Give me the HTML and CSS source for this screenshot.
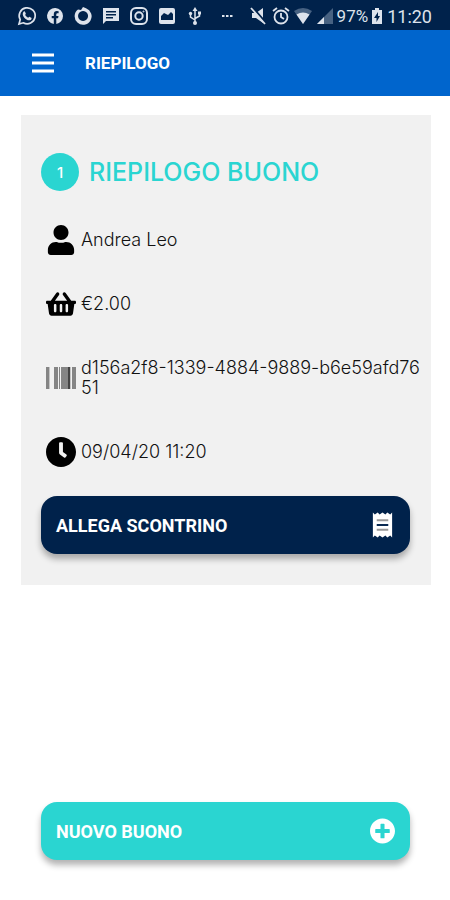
FILE: index.html
```html
<!DOCTYPE html>
<html lang="it">
<head>
<meta charset="utf-8">
<meta name="viewport" content="width=device-width, initial-scale=1">
<title>Riepilogo</title>
<link rel="stylesheet" href="styles.css">
</head>
<body>
<div class="status">
  <div class="status-group notifications">
    <svg class="status-icon" viewBox="0 0 20 20"><path d="M2 18l1.200-4.300A8 8 0 1 1 6.300 16.800z" fill="none" stroke="currentColor" stroke-width="1.700"/><path d="M6.800 5.600c.5-.4 1-.3 1.300.3l.7 1.500c.1.400-.1.700-.7 1.400.7 1.400 1.800 2.400 3.200 3 .6-.7.900-1.100 1.400-.9l1.600.8c.5.300.3 1.400-.3 2-2 1.500-5 0-6.700-2C5.400 9.500 5.200 7.200 6.800 5.600z" fill="currentColor"/></svg>
    <svg class="status-icon" viewBox="0 0 20 20"><path d="M18 10a8 8 0 1 0-9.200 7.900v-5.600H6.700V10h2.100V8.200c0-2 1.200-3.100 3-3.100l1.800.2v2h-1c-1 0-1.300.6-1.300 1.200V10h2.200l-.4 2.300h-1.800v5.600A8 8 0 0 0 18 10z" fill="currentColor"/></svg>
    <svg class="status-icon" viewBox="0 0 20 20"><path fill-rule="evenodd" d="M10 1l3 1.300A8.500 8.500 0 1 1 5 3.500L8 4zM10 5a5 5 0 1 0 .1 0z" fill="currentColor"/></svg>
    <svg class="status-icon" viewBox="0 0 20 20"><path fill-rule="evenodd" d="M2 2h16v13H5l-3 3zM5 5v1.500h10V5zm0 3v1.500h10V8zm0 3v1.500h7V11z" fill="currentColor"/></svg>
    <svg class="status-icon" viewBox="0 0 20 20" fill="none" stroke="currentColor" stroke-width="2"><rect x="2" y="2" width="16" height="16" rx="5"/><circle cx="10" cy="10" r="3.700"/><circle cx="14.500" cy="5.500" r=".5" stroke-width="1"/></svg>
    <svg class="status-icon" viewBox="0 0 20 20"><path fill-rule="evenodd" d="M4 2h12q2 0 2 2v12q0 2-2 2H4q-2 0-2-2V4q0-2 2-2zm0 12h12V8l-2-2-3 3-4-2-3 3z" fill="currentColor"/></svg>
    <svg class="status-icon" viewBox="0 0 20 20"><path d="M10 4v12M5.500 8v3l4.500 3M14.500 7v3L10 12.500" fill="none" stroke="currentColor" stroke-width="1.500"/><path d="M10 1l2.500 4h-5zM13 5.500h3v3h-3z" fill="currentColor"/><circle cx="5.500" cy="7.500" r="1.700" fill="currentColor"/><circle cx="10" cy="17" r="2" fill="currentColor"/></svg>
  </div>
  <svg class="status-icon" viewBox="0 0 20 20" fill="currentColor"><path d="M5 9h2.500v2H5zM9 9h2.500v2H9zM13 9h2.500v2H13z"/></svg>
  <div class="status-group system">
    <svg class="status-icon" viewBox="0 0 20 20"><path d="M3 7h4l7-5v15l-7-5H3z" fill="currentColor"/><path d="M4 2l14 16" stroke="#00224b" stroke-width="2"/><path d="M2 2l14 16" stroke="currentColor" stroke-width="1.800"/></svg>
    <svg class="status-icon" viewBox="0 0 20 20" fill="none" stroke="currentColor" stroke-width="1.800"><circle cx="10" cy="11" r="6.500"/><path d="M10 7v4l3 2M2 5l4-3M18 5l-4-3"/></svg>
    <svg class="status-icon" viewBox="0 0 20 20"><path d="M1 5q9-6 18 0l-9 13z" fill="#476282"/><path d="M3.500 8.500q6.500-4 13 0L10 18z" fill="currentColor"/></svg>
    <svg class="status-icon" viewBox="0 0 20 20"><path d="M18 2v16H2z" fill="#476282"/><path d="M9 11v7H2z" fill="currentColor"/></svg>
    <span class="percent">97%</span>
    <svg class="battery" viewBox="0 0 12 18"><path fill-rule="evenodd" d="M4 1h4v2h3v14H1V3h3zm3 4l-4 6h2.500v4L9 9H7z" fill="currentColor"/></svg>
    <time>11:20</time>
  </div>
</div>
<header class="app-bar">
  <button class="menu" type="button" aria-label="Menu"><svg viewBox="0 0 24 20"><path d="M1 2h22M1 10h22M1 18h22" stroke="currentColor" stroke-width="3"/></svg></button>
  <h1>RIEPILOGO</h1>
</header>
<main>
  <section class="card">
    <h2><span class="step">1</span>RIEPILOGO BUONO</h2>
    <ul>
      <li><svg class="icon" viewBox="0 0 448 512"><path d="M224 256c70.700 0 128-57.300 128-128S294.700 0 224 0 96 57.300 96 128s57.300 128 128 128zm89.600 32h-16.700c-22.200 10.200-46.900 16-72.900 16s-50.600-5.800-72.900-16h-16.700C60.200 288 0 348.200 0 422.400V464c0 26.500 21.500 48 48 48h352c26.500 0 48-21.500 48-48v-41.600c0-74.200-60.200-134.400-134.400-134.400z"/></svg><span>Andrea Leo</span></li>
      <li><svg class="icon" viewBox="0 0 576 512"><path d="M576 216v16c0 13.255-10.745 24-24 24h-8l-26.113 182.788C514.509 462.435 494.257 480 470.370 480H105.630c-23.887 0-44.139-17.565-47.518-41.212L32 256h-8c-13.255 0-24-10.745-24-24v-16c0-13.255 10.745-24 24-24h67.341l106.780-146.821c10.395-14.292 30.407-17.453 44.701-7.058 14.293 10.395 17.453 30.408 7.058 44.701L170.477 192h235.046L326.120 82.821c-10.395-14.292-7.234-34.306 7.059-44.701 14.291-10.395 34.306-7.235 44.701 7.058L484.659 192H552c13.255 0 24 10.745 24 24zM312 392V280c0-13.255-10.745-24-24-24s-24 10.745-24 24v112c0 13.255 10.745 24 24 24s24-10.745 24-24zm112 0V280c0-13.255-10.745-24-24-24s-24 10.745-24 24v112c0 13.255 10.745 24 24 24s24-10.745 24-24zm-224 0V280c0-13.255-10.745-24-24-24s-24 10.745-24 24v112c0 13.255 10.745 24 24 24s24-10.745 24-24z"/></svg><span>€2.00</span></li>
      <li><svg class="icon" viewBox="0 0 30 30"><path d="M0 4h3v22H0zM8 4h4v22H8zM13 4h1v22h-1zM15 4h7v22h-7zM26 4h4v22h-4z" fill="#858585"/><path d="M3 4h1v22H3zM24 4h1v22h-1z" fill="#c4c4c4"/><path d="M22 4h2v22h-2z" fill="#444"/></svg><span>d156a2f8-1339-4884-9889-b6e59afd7651</span></li>
      <li><svg class="icon" viewBox="8 8 496 496"><path d="M256,8C119,8,8,119,8,256S119,504,256,504,504,393,504,256,393,8,256,8Zm92.490,313h0l-20,25a16,16,0,0,1-22.490,2.500h0l-67-49.720a40,40,0,0,1-15-31.230V112a16,16,0,0,1,16-16h32a16,16,0,0,1,16,16V256l58,42.500A16,16,0,0,1,348.490,321Z"/></svg><span>09/04/20 11:20</span></li>
    </ul>
    <button class="action attach" type="button">ALLEGA SCONTRINO
      <svg viewBox="0 0 26 26"><path d="M3 0l2 2 3-2 2 2 3-2 3 2 2-2 3 2 2-2v26l-2-2-3 2-2-2-3 2-3-2-2 2-3-2-2 2z" fill="#fff"/><path d="M7 8h12M7 18h12" stroke="#999" stroke-width="2"/><path d="M7 13h12" stroke="#00224b" stroke-width="2"/></svg>
    </button>
  </section>
  <button class="action create" type="button">NUOVO BUONO
    <svg viewBox="8 8 496 496"><path fill="#fff" d="M256 8C119 8 8 119 8 256s111 248 248 248 248-111 248-248S393 8 256 8zm144 276c0 6.600-5.400 12-12 12h-92v92c0 6.600-5.400 12-12 12h-56c-6.600 0-12-5.400-12-12v-92h-92c-6.600 0-12-5.400-12-12v-56c0-6.600 5.400-12 12-12h92v-92c0-6.600 5.400-12 12-12h56c6.600 0 12 5.400 12 12v92h92c6.600 0 12 5.400 12 12v56z"/></svg>
  </button>
</main>
</body>
</html>
```

FILE: styles.css
```css
* { box-sizing: border-box; }
body {
  margin: 0;
  min-height: 100vh;
  display: flex;
  flex-direction: column;
  background: #fff;
  font-family: Roboto, sans-serif;
}
button { border: 0; font: inherit; cursor: pointer; }
.status {
  display: flex;
  align-items: center;
  justify-content: space-between;
  height: 30px;
  padding: 2px 18px 0 17px;
  background: #00224b;
  color: #dde3ec;
  font-size: 18px;
}
.status-group { display: flex; align-items: center; }
.notifications { gap: 8px; }
.system { gap: 2px; }
.status-icon { width: 20px; height: 20px; }
.percent { font-size: 17px; }
.battery { width: 12px; height: 18px; margin: 0 2px 0 1px; }
.app-bar {
  display: flex;
  align-items: center;
  gap: 30px;
  height: 66px;
  padding: 0 31px;
  background: #0065cd;
  color: #fff;
}
.app-bar h1 { margin: 0; font-size: 17px; font-weight: 700; }
.menu { display: flex; padding: 0; background: none; color: inherit; }
.menu svg { width: 24px; height: 20px; }
main {
  flex: 1;
  display: flex;
  flex-direction: column;
  padding: 19px 19px 40px 21px;
}
.card { padding: 38px 0 31px 20px; background: #f1f1f1; font-family: Inter, sans-serif; }
.card h2 {
  display: flex;
  align-items: center;
  gap: 10px;
  margin: 0 0 17px;
  color: #2ad5d1;
  font-size: 25px;
  font-weight: 500;
}
.step {
  display: flex;
  align-items: center;
  justify-content: center;
  width: 38px;
  height: 38px;
  border-radius: 50%;
  background: #2ad5d1;
  color: #fff;
  font-size: 15px;
}
.card ul { margin: 0 0 12px; padding: 0; list-style: none; }
.card li {
  display: flex;
  align-items: center;
  gap: 5px;
  padding: 0 5px;
  color: #111;
  font-size: 18px;
  font-weight: 300;
  line-height: 20px;
}
.card li span { padding: 22px 0; word-break: break-all; }
.icon { flex: none; width: 30px; height: 30px; fill: #000; }
.action {
  display: flex;
  align-items: center;
  justify-content: space-between;
  height: 58px;
  padding: 0 15px;
  border-radius: 16px;
  color: #fff;
  font-family: Roboto, sans-serif;
  font-size: 18px;
  font-weight: 700;
  box-shadow: 0 5px 6px rgba(0, 0, 0, .3);
}
.action svg { width: 25px; height: 26px; }
.attach { width: calc(100% - 21px); background: #00224b; }
.create { margin: auto 21px 0 20px; background: #2ad5d1; }
```
